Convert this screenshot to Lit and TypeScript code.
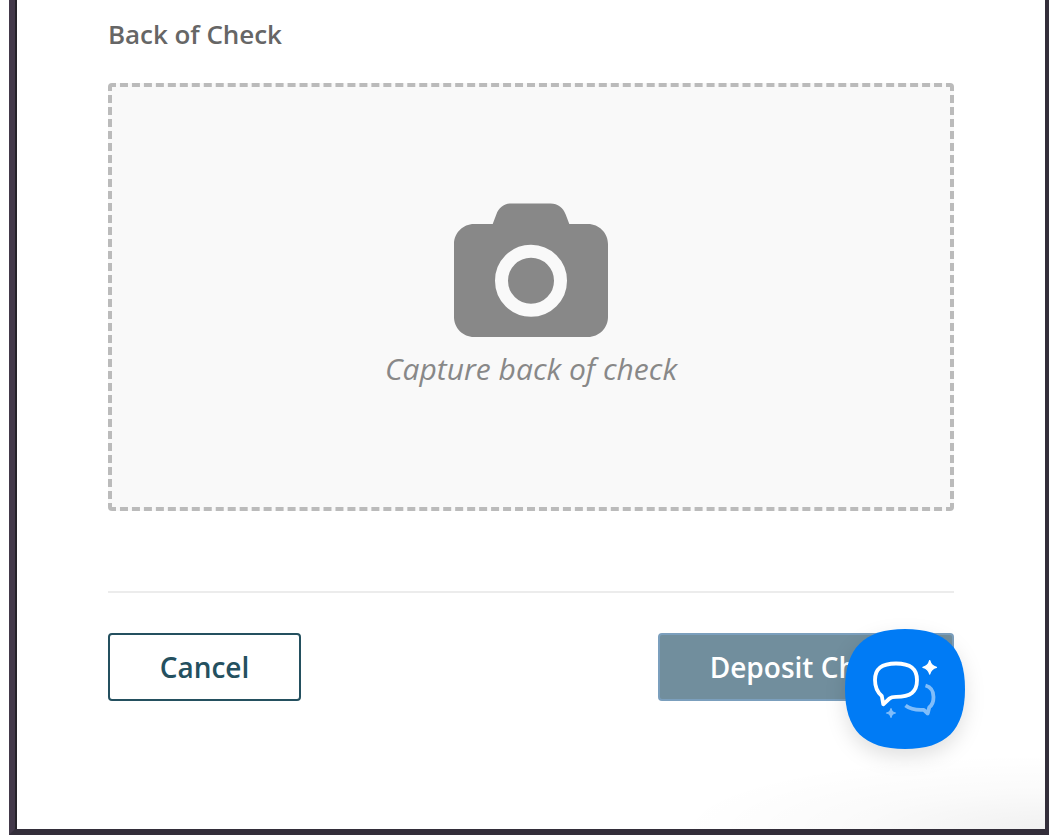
import { html, css, LitElement } from "lit";
import { customElement, property } from "lit/decorators.js";

@customElement("check-capture")
export class CheckCapture extends LitElement {
    static get styles(){
        return [
            css `
            :host {
                display: block;
            }
            .label {
                margin: 0 0 31px;
                color: #666;
                font-size: 26px;
                font-weight: 600;
                line-height: 36px;
                letter-spacing: -0.05px;
            }
            .drop {
                box-sizing: border-box;
                height: 428px;
                padding-top: 116px;
                display: flex;
                flex-direction: column;
                align-items: center;
                background-color: #f9f9f9;
                border: 4px dashed #bbb;
                border-radius: 4px;
            }
            .camera {
                display: block;
                width: 154px;
                height: 134px;
                fill: #888;
            }
            .ring {
                fill: none;
                stroke: #f9f9f9;
                stroke-width: 13;
            }
            .caption {
                margin-top: 12px;
                color: #888;
                font-size: 30px;
                font-style: italic;
                line-height: 40px;
                white-space: nowrap;
            }
            `
        ]
    };
    @property() label = "";
    @property() caption = "";

    render() {
        return html `
            <h3 class="label">${this.label}</h3>
            <div class="drop">
                <svg class="camera" viewBox="0 0 154 134">
                    <path d="M20 21H38.700L42.300 11.500C45 4.500 50 .5 57.500 .5H96.500C104 .5 109 4.500 111.700 11.500L115.300 21H134C145 21 154 30 154 41V114C154 125 145 134 134 134H20C9 134 0 125 0 114V41C0 30 9 21 20 21Z"/>
                    <circle class="ring" cx="77" cy="77.700" r="29.500"/>
                </svg>
                <div class="caption">${this.caption}</div>
            </div>
        `;
    }
}

@customElement("chat-launcher")
export class ChatLauncher extends LitElement {
    static get styles(){
        return [
            css `
            :host {
                display: block;
                width: 120px;
                height: 120px;
            }
            .launcher {
                display: block;
                overflow: visible;
                filter: drop-shadow(0 8px 10px rgba(0, 0, 0, 0.12));
            }
            .line {
                fill: none;
                stroke: #fff;
                stroke-width: 3.8;
                stroke-linecap: butt;
                stroke-linejoin: round;
            }
            .star {
                fill: #fff;
                stroke: #fff;
                stroke-width: 1.2;
                stroke-linejoin: round;
            }
            .faded {
                opacity: 0.5;
            }
            `
        ]
    };

    render() {
        return html `
            <svg class="launcher" width="120" height="120" viewBox="0 0 120 120">
                <path fill="#007bf5" d="M60 0C101 0 120 19 120 60S101 120 60 120S0 101 0 60S19 0 60 0Z"/>
                <path class="line" d="M38.300 75.300L36.800 67C31.500 62.500 30 57.500 30 51C30 39.500 36.500 34.500 51 34.500C65.500 34.500 72 39.500 72 51C72 63 65.500 67.800 51 67.800C48.500 67.800 46 68.200 44.500 69.500Z"/>
                <path class="star" d="M84.700 31.500Q86 37 91.500 38.300Q86 39.600 84.700 45.100Q83.400 39.600 77.900 38.300Q83.400 37 84.700 31.500Z"/>
                <g class="faded">
                    <path class="line" d="M80.500 56.500C86 58 88.500 62.500 88.500 68C88.500 73 87.500 76 84.300 78.300L82.700 84.500L78.800 80.800C71 81.300 65 80 60.500 76.500"/>
                    <path class="star" d="M46 79.500Q46.700 83.300 50.500 84Q46.700 84.700 46 88.500Q45.300 84.700 41.500 84Q45.300 83.300 46 79.500Z"/>
                </g>
            </svg>
        `;
    }
}

@customElement("app-root")
export class AppRoot extends LitElement {
    static get styles(){
        return [
            css `
            :host {
                display: block;
                position: relative;
                box-sizing: border-box;
                width: 1063px;
                height: 835px;
                padding: 0 14px 0 9px;
                overflow: hidden;
                background-color: #fff;
                font-family: "Open Sans", sans-serif;
            }
            .frame {
                box-sizing: border-box;
                height: 835px;
                border: solid #332e3a;
                border-width: 0 4px 6px 6px;
                border-left-color: #43394a;
            }
            .page {
                box-sizing: border-box;
                height: 829px;
                padding: 16px 91px 0;
                border-left: 2px solid #26232a;
                background: radial-gradient(ellipse 370px 75px at 100% 100%, rgba(0, 0, 0, 0.055), rgba(0, 0, 0, 0.02) 50%, transparent) #fff;
            }
            .actions {
                display: flex;
                justify-content: space-between;
                margin-top: 80px;
                padding-top: 40px;
                border-top: 2px solid #ececec;
            }
            .button {
                box-sizing: border-box;
                height: 68px;
                padding: 0;
                border: 2px solid #24505f;
                border-radius: 4px;
                background-color: #fff;
                color: #24505f;
                font-family: inherit;
                font-size: 28px;
                font-weight: 600;
                line-height: 38px;
                white-space: nowrap;
            }
            .cancel {
                width: 193px;
            }
            .deposit {
                width: 296px;
                border-color: #7b9fbd;
                background-color: #718e9d;
                color: #fff;
            }
            .chat {
                position: absolute;
                left: 845px;
                top: 629px;
            }
            `
        ]
    };

    render() {
        return html `
            <div class="frame">
                <div class="page">
                    <check-capture label="Back of Check" caption="Capture back of check"></check-capture>
                    <div class="actions">
                        <button class="button cancel">Cancel</button>
                        <button class="button deposit">Deposit Check</button>
                    </div>
                </div>
            </div>
            <chat-launcher class="chat"></chat-launcher>
        `;
    }
}

declare global {
  interface HTMLElementTagNameMap {
    'app-root': AppRoot;
    'check-capture': CheckCapture;
    'chat-launcher': ChatLauncher;
  }
}
